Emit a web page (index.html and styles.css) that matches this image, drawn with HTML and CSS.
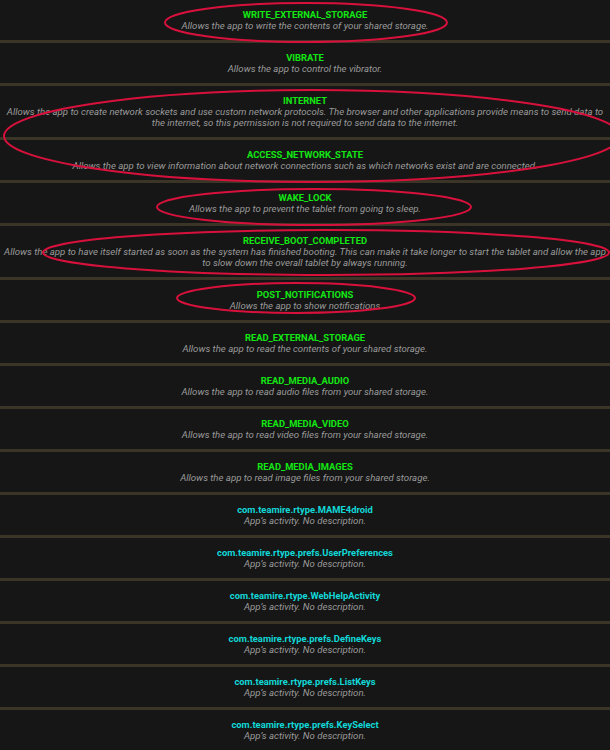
FILE: index.html
```html
<!DOCTYPE html>
<html>
<head>
<meta charset="utf-8">
<link rel="stylesheet" href="styles.css">
</head>
<body>
<div class="page">
  <ul class="list">
    <li class="item"><div class="title perm">WRITE_EXTERNAL_STORAGE</div><div class="desc">Allows the app to write the contents of your shared storage.</div></li>
    <li class="item"><div class="title perm">VIBRATE</div><div class="desc">Allows the app to control the vibrator.</div></li>
    <li class="item"><div class="title perm">INTERNET</div><div class="desc">Allows the app to create network sockets and use custom network protocols. The browser and other applications provide means to send data to the internet, so this permission is not required to send data to the internet.</div></li>
    <li class="item"><div class="title perm">ACCESS_NETWORK_STATE</div><div class="desc">Allows the app to view information about network connections such as which networks exist and are connected.</div></li>
    <li class="item"><div class="title perm">WAKE_LOCK</div><div class="desc">Allows the app to prevent the tablet from going to sleep.</div></li>
    <li class="item"><div class="title perm">RECEIVE_BOOT_COMPLETED</div><div class="desc">Allows the app to have itself started as soon as the system has finished booting. This can make it take longer to start the tablet and allow the app to slow down the overall tablet by always running.</div></li>
    <li class="item"><div class="title perm">POST_NOTIFICATIONS</div><div class="desc">Allows the app to show notifications</div></li>
    <li class="item"><div class="title perm">READ_EXTERNAL_STORAGE</div><div class="desc">Allows the app to read the contents of your shared storage.</div></li>
    <li class="item"><div class="title perm">READ_MEDIA_AUDIO</div><div class="desc">Allows the app to read audio files from your shared storage.</div></li>
    <li class="item"><div class="title perm">READ_MEDIA_VIDEO</div><div class="desc">Allows the app to read video files from your shared storage.</div></li>
    <li class="item"><div class="title perm">READ_MEDIA_IMAGES</div><div class="desc">Allows the app to read image files from your shared storage.</div></li>
    <li class="item"><div class="title activity">com.teamire.rtype.MAME4droid</div><div class="desc">App’s activity. No description.</div></li>
    <li class="item"><div class="title activity">com.teamire.rtype.prefs.UserPreferences</div><div class="desc">App’s activity. No description.</div></li>
    <li class="item"><div class="title activity">com.teamire.rtype.WebHelpActivity</div><div class="desc">App’s activity. No description.</div></li>
    <li class="item"><div class="title activity">com.teamire.rtype.prefs.DefineKeys</div><div class="desc">App’s activity. No description.</div></li>
    <li class="item"><div class="title activity">com.teamire.rtype.prefs.ListKeys</div><div class="desc">App’s activity. No description.</div></li>
    <li class="item"><div class="title activity">com.teamire.rtype.prefs.KeySelect</div><div class="desc">App’s activity. No description.</div></li>
  </ul>
  <svg class="marks" width="610" height="750" viewBox="0 0 610 750">
    <ellipse cx="306" cy="22.5" rx="141" ry="19.5"/>
    <ellipse cx="312" cy="136" rx="308" ry="46"/>
    <ellipse cx="314" cy="207" rx="157" ry="18"/>
    <ellipse cx="326" cy="252.5" rx="283" ry="22.5"/>
    <ellipse cx="296" cy="298" rx="119" ry="15"/>
  </svg>
</div>
</body>
</html>
```
FILE: styles.css
```css
html, body {
  margin: 0;
  padding: 0;
  background: #161616;
  overflow: hidden;
}
.page {
  position: relative;
  width: 610px;
  height: 750px;
  overflow: hidden;
  font-family: Roboto, "Liberation Sans", sans-serif;
}
.list {
  list-style: none;
  margin: 0;
  padding: 0;
}
.item {
  padding: 9px 4px 9px;
  border-bottom: 3px solid #3a3526;
  text-align: center;
  line-height: 11px;
}
.title {
  font-size: 9.4px;
  font-weight: bold;
}
.perm { color: #14e614; }
.activity { color: #12d8d8; }
.desc {
  font-size: 9.65px;
  font-style: italic;
  color: #9a9a9a;
}
.marks {
  position: absolute;
  top: 0;
  left: 0;
  pointer-events: none;
}
.marks ellipse {
  fill: none;
  stroke: #d8113c;
  stroke-width: 2;
}
```
